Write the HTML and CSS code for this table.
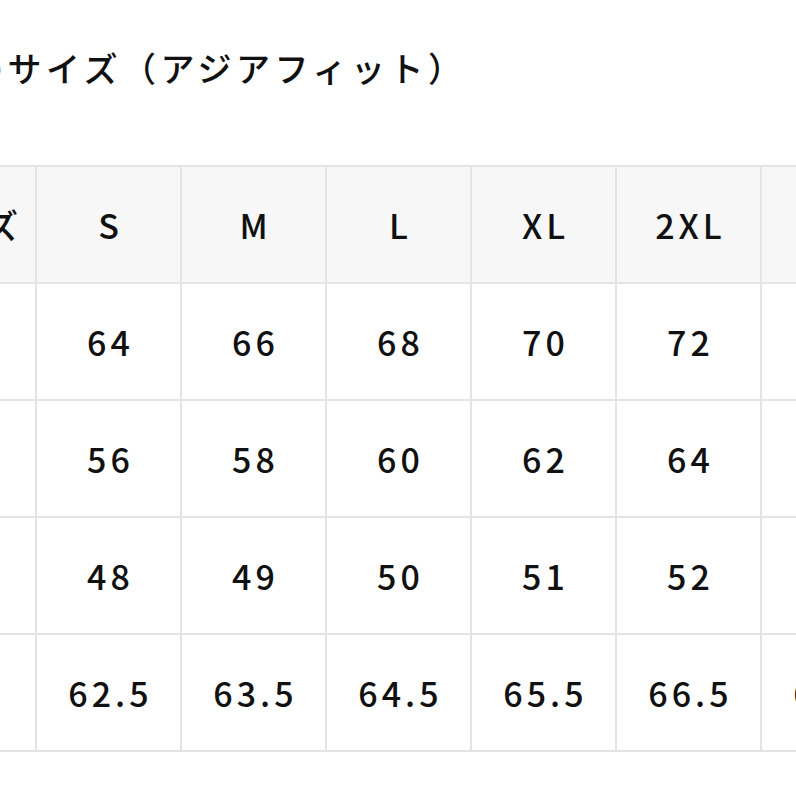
FILE: index.html
```html
<!DOCTYPE html>
<html lang="ja">
<head>
<meta charset="utf-8">
<title>サイズ表</title>
<link rel="stylesheet" href="styles.css">
</head>
<body>
<div class="page">
  <h2 class="title">商品のサイズ（アジアフィット）</h2>
  <table class="size-table">
    <thead>
      <tr>
        <th>サイズ</th><th>S</th><th>M</th><th>L</th><th>XL</th><th>2XL</th><th>3XL</th>
      </tr>
    </thead>
    <tbody>
      <tr><td>着丈</td><td>64</td><td>66</td><td>68</td><td>70</td><td>72</td><td>74</td></tr>
      <tr><td>身幅</td><td>56</td><td>58</td><td>60</td><td>62</td><td>64</td><td>66</td></tr>
      <tr><td>肩幅</td><td>48</td><td>49</td><td>50</td><td>51</td><td>52</td><td>53</td></tr>
      <tr><td>袖丈</td><td>62.5</td><td>63.5</td><td>64.5</td><td>65.5</td><td>66.5</td><td>67.5</td></tr>
    </tbody>
  </table>
</div>
</body>
</html>
```

FILE: styles.css
```css
html, body {
  margin: 0;
  padding: 0;
  background: #ffffff;
}
body {
  width: 796px;
  height: 796px;
  overflow: hidden;
  font-family: "Noto Sans CJK JP", "Noto Sans", sans-serif;
  color: #111111;
}
.page {
  display: flex;
  flex-direction: column;
  margin-left: -110px;
}
.title {
  margin: 44px 0 0 2px;
  height: 48px;
  font-size: 34px;
  line-height: 48px;
  font-weight: 500;
  letter-spacing: 4.5px;
  white-space: nowrap;
}
.size-table {
  margin-top: 73px;
  border-collapse: separate;
  border-spacing: 0;
  table-layout: fixed;
  border-top: 2px solid #e4e4e4;
  border-left: 2px solid #e4e4e4;
  width: 1017px;
}
.size-table th,
.size-table td {
  width: 143px;
  height: 115px;
  padding: 0;
  box-sizing: content-box;
  border-right: 2px solid #e4e4e4;
  border-bottom: 2px solid #e4e4e4;
  text-align: center;
  vertical-align: middle;
  font-size: 34px;
  font-weight: 500;
  letter-spacing: 4px;
  text-indent: 4px;
  white-space: nowrap;
  overflow: visible;
}
.size-table th {
  background: #f7f7f7;
}
```
